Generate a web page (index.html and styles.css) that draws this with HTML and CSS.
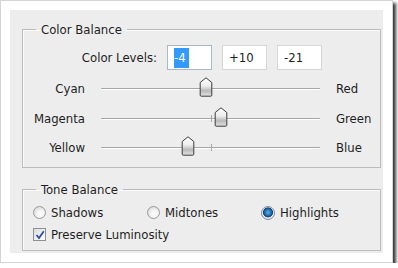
FILE: index.html
```html
<!DOCTYPE html>
<html lang="en">
<head>
    <meta charset="UTF-8">
    <title>Color Balance</title>
    <link rel="stylesheet" href="styles.css">
</head>
<body>

<svg class="defs" width="0" height="0">
    <defs>
        <linearGradient id="thumbFill" x1="0" y1="0" x2="0" y2="1">
            <stop offset="0" stop-color="#ffffff"/>
            <stop offset="0.45" stop-color="#ececec"/>
            <stop offset="0.7" stop-color="#b9b9b9"/>
            <stop offset="1" stop-color="#e4e4e4"/>
        </linearGradient>
    </defs>
</svg>

<div class="frame">
    <div class="panel">

        <fieldset class="group">
            <legend>Color Balance</legend>

            <div class="levels">
                <span class="levels-label">Color Levels:</span>
                <div class="level focused"><span class="sel">-4</span></div>
                <div class="level">+10</div>
                <div class="level">-21</div>
            </div>

            <div class="sliders">
                <span class="left">Cyan</span>
                <div class="track"><span class="tick"></span><svg class="thumb" style="left: 48%" width="14" height="20" viewBox="0 0 14 20"><path d="M7 0.8 L12.8 5.5 L12.8 18.2 Q12.8 19.2 11.8 19.2 L2.2 19.2 Q1.2 19.2 1.2 18.2 L1.2 5.5 Z" fill="url(#thumbFill)" stroke="#3c3c3c" stroke-width="1"/></svg></div>
                <span class="right">Red</span>

                <span class="left">Magenta</span>
                <div class="track"><span class="tick"></span><svg class="thumb" style="left: 55%" width="14" height="20" viewBox="0 0 14 20"><path d="M7 0.8 L12.8 5.5 L12.8 18.2 Q12.8 19.2 11.8 19.2 L2.2 19.2 Q1.2 19.2 1.2 18.2 L1.2 5.5 Z" fill="url(#thumbFill)" stroke="#3c3c3c" stroke-width="1"/></svg></div>
                <span class="right">Green</span>

                <span class="left">Yellow</span>
                <div class="track"><span class="tick"></span><svg class="thumb" style="left: 39.5%" width="14" height="20" viewBox="0 0 14 20"><path d="M7 0.8 L12.8 5.5 L12.8 18.2 Q12.8 19.2 11.8 19.2 L2.2 19.2 Q1.2 19.2 1.2 18.2 L1.2 5.5 Z" fill="url(#thumbFill)" stroke="#3c3c3c" stroke-width="1"/></svg></div>
                <span class="right">Blue</span>
            </div>
        </fieldset>

        <fieldset class="group tone">
            <legend>Tone Balance</legend>

            <div class="radios">
                <label class="option"><span class="radio"></span>Shadows</label>
                <label class="option"><span class="radio"></span>Midtones</label>
                <label class="option"><span class="radio checked"></span>Highlights</label>
            </div>

            <label class="option check-row">
                <span class="checkbox">
                    <svg width="10" height="10" viewBox="0 0 10 10"><path d="M1.5 5 L4 8 L8.8 1.2" fill="none" stroke="#2b4f9e" stroke-width="1.8"/></svg>
                </span>Preserve Luminosity
            </label>
        </fieldset>

    </div>
</div>

</body>
</html>
```

FILE: styles.css
```css
body {
    margin: 0;
    background-color: #ffffff;
    font-family: "DejaVu Sans Condensed", "DejaVu Sans", sans-serif;
    font-size: 13px;
    color: #1e1e1e;
}
.defs {
    position: absolute;
}
.frame {
    width: 382px;
    height: 252px;
    padding: 9px 0 0 9px;
    border: 1px solid #d4d4d4;
    background-color: #ffffff;
    box-shadow: 3px 3px 3px #3a3a3a;
}
.panel {
    width: 361px;
    height: 231px;
    padding: 12px 0 0 12px;
    background-color: #ededed;
}
.group {
    width: 357px;
    margin: 0;
    padding: 0;
    border: 1px solid #bcbcbc;
    box-shadow: inset 1px 1px 0 #fafafa;
}
.group legend {
    margin-left: 13px;
    padding: 0 5px;
    line-height: 15px;
}

/* color levels row */
.levels {
    display: flex;
    align-items: center;
    gap: 10px;
    margin-top: 8px;
}
.levels-label {
    width: 134px;
    text-align: right;
}
.level {
    width: 37px;
    height: 23px;
    line-height: 23px;
    padding-left: 6px;
    background-color: #ffffff;
    border: 1px solid #d6d6d6;
}
.level.focused {
    border-color: #a9b7c9;
}
.sel {
    background-color: #3399ff;
    color: #ffffff;
    padding: 2px 3px 3px 0;
}

/* sliders */
.sliders {
    display: grid;
    grid-template-columns: 62px 219px auto;
    grid-auto-rows: 29.5px;
    column-gap: 16px;
    align-items: center;
    margin-top: 4px;
    padding-bottom: 4px;
}
.sliders .left {
    text-align: right;
}
.track {
    position: relative;
    height: 1px;
    background-color: #a6a6a6;
    box-shadow: 0 1px 0 #ffffff;
    border-radius: 1px;
}
.tick {
    position: absolute;
    left: 50%;
    top: -3px;
    width: 1px;
    height: 7px;
    background-color: #a6a6a6;
}
.thumb {
    position: absolute;
    top: -11px;
    margin-left: -7px;
}

/* tone balance */
.tone {
    margin-top: 14px;
}
.radios {
    display: grid;
    grid-template-columns: 114px 114px auto;
    margin: 7px 0 0 10px;
}
.option {
    display: flex;
    align-items: center;
    gap: 5px;
    height: 18px;
}
.radio {
    width: 11px;
    height: 11px;
    border: 1px solid #9a9a9a;
    border-radius: 50%;
    background: radial-gradient(circle at 60% 65%, #ffffff 0, #f2f2f2 40%, #cfcfcf 100%);
}
.radio.checked {
    width: 12px;
    height: 12px;
    border-color: #7f8fa3;
    background: radial-gradient(circle at 50% 45%, #5fb1e6 0, #1f6fb4 35%, #15456e 52%, #e6ebf0 60%, #c5ccd3 100%);
}
.check-row {
    margin: 4px 0 6px 10px;
}
.checkbox {
    width: 11px;
    height: 11px;
    border: 1px solid #8e8f8f;
    background: linear-gradient(135deg, #dcdcdc, #ffffff);
    display: flex;
    align-items: center;
    justify-content: center;
}
```
